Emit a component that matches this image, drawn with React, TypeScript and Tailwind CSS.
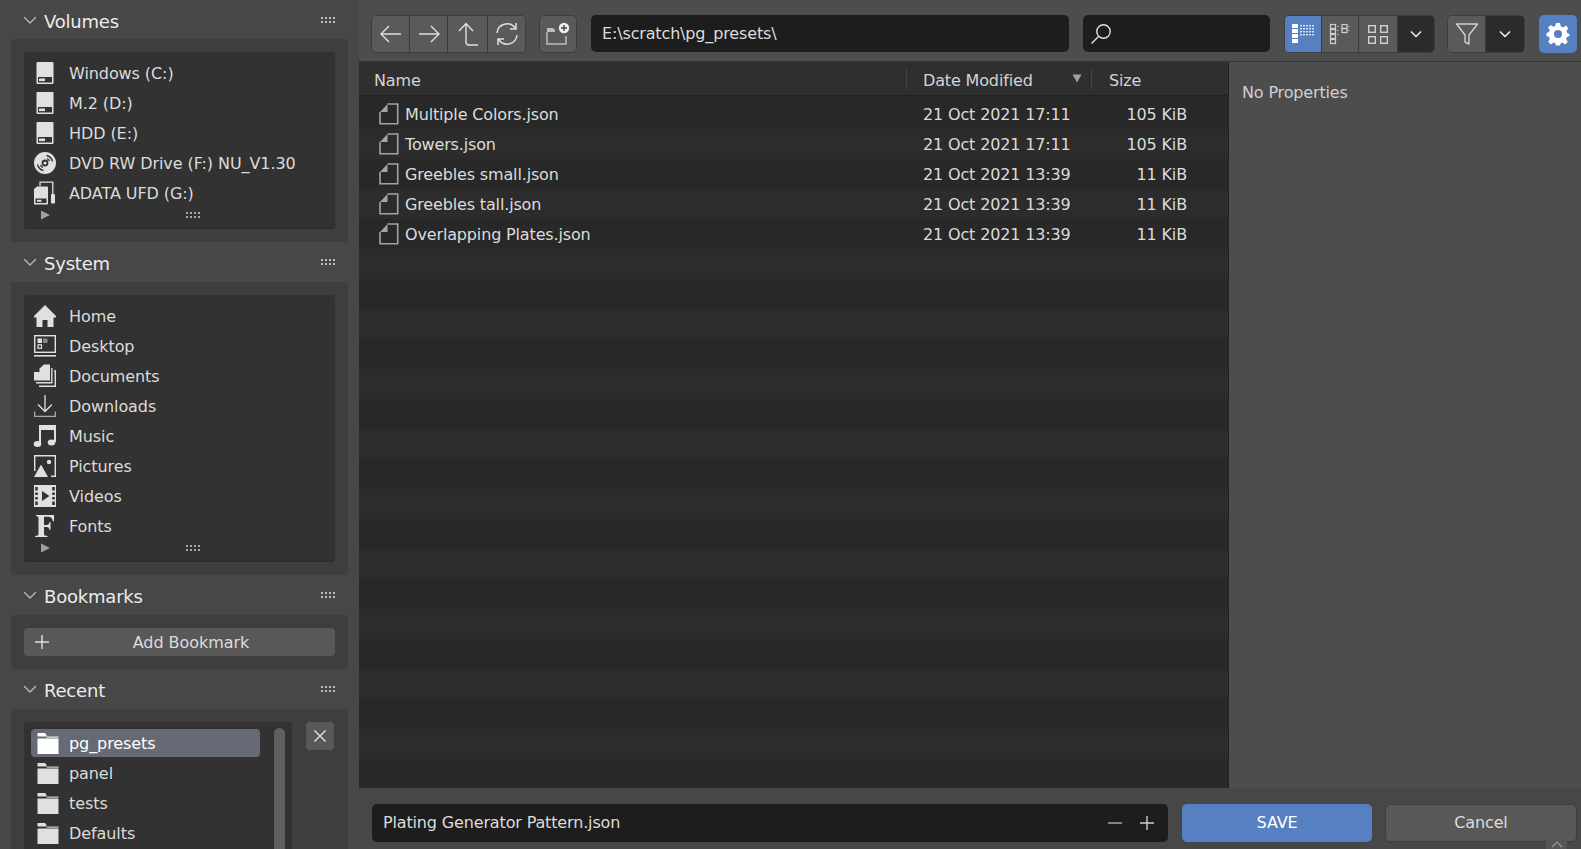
import React from "react";

const C = "#e0e0e0";

const Chevron = () => (
  <svg width="16" height="16" viewBox="0 0 16 16" fill="none" stroke="#b8b8b8" strokeWidth="1.4" strokeLinecap="round" strokeLinejoin="round" className="shrink-0">
    <path d="M2.5 5.5 L8 11 L13.5 5.5" />
  </svg>
);
const ChevronSmall = () => (
  <svg width="14" height="14" viewBox="0 0 14 14" fill="none" stroke="#e6e6e6" strokeWidth="1.7" strokeLinecap="round" strokeLinejoin="round">
    <path d="M2.5 5 L7 9.5 L11.5 5" />
  </svg>
);
const Grip = ({ color = "#bdbdbd" }: { color?: string }) => (
  <svg width="16" height="8" viewBox="0 0 16 8" className="shrink-0">
    {[0, 1, 2, 3].map((i) =>
      [0, 1].map((j) => <rect key={i + "-" + j} x={1 + i * 4} y={1 + j * 4} width="2" height="2" fill={color} />)
    )}
  </svg>
);
const Tri = ({ fill = "#a0a0a0" }: { fill?: string }) => (
  <svg width="11" height="10" viewBox="0 0 11 10" className="shrink-0"><path d="M1 0.5 L10 5 L1 9.5 Z" fill={fill} /></svg>
);

const Ico = ({ children, w = 24 }: { children: React.ReactNode; w?: number }) => (
  <svg width={w} height={w} viewBox="0 0 24 24" className="shrink-0" fill="none">{children}</svg>
);

const Drive = () => (
  <Ico>
    <path fillRule="evenodd" clipRule="evenodd" d="M3.5 2 a1 1 0 0 1 1-1 h15 a1 1 0 0 1 1 1 v20 a1 1 0 0 1-1 1 h-15 a1 1 0 0 1-1-1 Z M5 16 v5.6 h14 v-5.6 Z" fill={C} />
    <rect x="6" y="17.5" width="6" height="2.6" fill={C} />
  </Ico>
);
const Disc = () => (
  <Ico>
    <path fillRule="evenodd" clipRule="evenodd" d="M12 1a11 11 0 1 0 0 22a11 11 0 0 0 0-22Z M12 8.6a3.4 3.4 0 1 1 0 6.8a3.4 3.4 0 0 1 0-6.8Z" fill={C} />
    <circle cx="12" cy="12" r="1.6" fill={C} />
    <path d="M13.5 4.5a8 8 0 0 1 6 6 M14 7.5a5 5 0 0 1 2.5 2.5 M10.5 19.5a8 8 0 0 1-6-6 M10 16.5a5 5 0 0 1-2.5-2.5" stroke="#333" strokeWidth="1.3" />
  </Ico>
);
const Usb = () => (
  <Ico>
    <path fillRule="evenodd" clipRule="evenodd" d="M1 8 L4 5.5 H14 a1 1 0 0 1 1 1 v16 a1 1 0 0 1-1 1 H2 a1 1 0 0 1-1-1 Z M2.5 17.5 v4.6 h11 v-4.6 Z" fill={C} />
    <rect x="4" y="18.8" width="4.5" height="2" fill={C} />
    <path d="M7 5 V1.2 H19.8 V13" stroke={C} strokeWidth="1.3" />
    <rect x="18" y="13" width="4" height="9.5" rx="1" fill={C} />
  </Ico>
);
const Home = () => (
  <Ico>
    <path d="M12 1 L23 12 V13.5 H20.5 V23 H14.5 V16 H9.5 V23 H3.5 V13.5 H1 V12 Z" fill={C} />
  </Ico>
);
const Desktop = () => (
  <Ico>
    <rect x="1.7" y="1.7" width="20.6" height="16.6" stroke={C} strokeWidth="1.4" />
    <rect x="1" y="21" width="22" height="1.6" fill={C} />
    <rect x="4.5" y="4.5" width="4.5" height="4.5" fill={C} />
    <rect x="10" y="4.5" width="4.5" height="4.5" fill="#8a8a8a" />
    <rect x="5" y="10.8" width="3.5" height="3.5" stroke={C} strokeWidth="1.2" />
  </Ico>
);
const Docs = () => (
  <Ico>
    <path d="M6.5 4.5 L11 0.5 H17 V16.5 H1 V8 H6.5 Z" fill={C} />
    <path d="M18.8 4 V18.8 H3 M21 7 H22.3 V22.3 H6" stroke={C} strokeWidth="1.4" />
  </Ico>
);
const Down = () => (
  <Ico>
    <path d="M12 1 V17 M5 10.5 L12 17.5 L19 10.5" stroke={C} strokeWidth="1.3" strokeLinejoin="round" />
    <path d="M1.7 17.5 V22.3 H22.3 V17.5" stroke="#a8a8a8" strokeWidth="1.3" />
  </Ico>
);
const Music = () => (
  <Ico>
    <path d="M7 20 V2 H22 V18" stroke={C} strokeWidth="2" />
    <path d="M7 2 H22 V6 H7 Z" fill={C} />
    <ellipse cx="4.5" cy="20" rx="3.8" ry="3" fill={C} />
    <ellipse cx="18.5" cy="18.5" rx="3.8" ry="3" fill={C} />
  </Ico>
);
const Pict = () => (
  <Ico>
    <path d="M1.7 17 V1.7 H22.3 V22.3 H18" stroke={C} strokeWidth="1.4" />
    <path d="M1 23 L8 10.5 L15 23 Z" fill={C} />
    <circle cx="16" cy="8" r="2.2" fill={C} />
  </Ico>
);
const Video = () => (
  <Ico>
    <path fillRule="evenodd" clipRule="evenodd" d="M1 1 H23 V23 H1 Z M2.2 3 V6.5 H4.8 V3 Z M2.2 8.5 V11 H4.8 V8.5 Z M2.2 13 V15.5 H4.8 V13 Z M2.2 17.5 V21 H4.8 V17.5 Z M19.2 3 V6.5 H21.8 V3 Z M19.2 8.5 V11 H21.8 V8.5 Z M19.2 13 V15.5 H21.8 V13 Z M19.2 17.5 V21 H21.8 V17.5 Z M9 7 V17 L16.5 12 Z" fill={C} />
  </Ico>
);
const FontF = () => (
  <Ico>
    <path d="M3 1 H21 V7.5 H20 C19.5 4 17.5 2.8 14 2.8 H11 V11 H13.5 C15.5 11 16.2 10 16.5 8 H17.5 V16 H16.5 C16.2 14 15.5 13 13.5 13 H11 V20 C11 21.3 12 21.8 14.5 22 V23 H2 V22 C4.5 21.8 5.5 21.3 5.5 20 V4 C5.5 2.7 4.5 2.2 3 2 Z" fill={C} />
  </Ico>
);
const Folder = ({ c = C }: { c?: string }) => (
  <Ico>
    <path d="M1.5 2 H9 L10.5 4 V5.5 H1.5 Z" fill={c} />
    <path d="M1.5 7.5 H22.5 V23 H1.5 Z" fill={c} />
    <path d="M10.5 5.5 H22.5 V6.8 H10.5 Z" fill={c} opacity="0.85" />
  </Ico>
);
const FileIco = () => (
  <svg width="20" height="22" viewBox="0 0 20 22" fill="none" className="shrink-0">
    <path d="M1 9 L8.5 1 V9 Z" fill="#a3a3a3" />
    <path d="M8.5 1 H18.7 V20.7 H1 V9" stroke="#a3a3a3" strokeWidth="1.6" />
  </svg>
);

const RowItem = ({ icon, label }: { icon: React.ReactNode; label: string }) => (
  <div className="flex h-[30px] items-center">
    <div className="w-[30px] flex justify-center -ml-[2px] mr-[9px]">{icon}</div>
    <span className="text-[#dcdcdc] pt-[1px] tracking-[-0.08px]">{label}</span>
  </div>
);
const RecentItem = ({ icon, label, selected }: { icon: React.ReactNode; label: string; selected?: boolean }) => (
  <div className={selected ? "flex h-7 my-px items-center rounded-[4px] bg-[#656a75]" : "flex h-[30px] items-center"}>
    <div className="w-[30px] flex justify-center ml-[2px] mr-[6px]">{icon}</div>
    <span className={selected ? "text-white pt-[1px] tracking-[-0.08px]" : "text-[#dcdcdc] pt-[1px] tracking-[-0.08px]"}>{label}</span>
  </div>
);

const PanelHead = ({ title, h, nudge = "pt-[3px]" }: { title: string; h: string; nudge?: string }) => (
  <div className={`${h} flex items-center pl-[22px] pr-[23px] justify-between shrink-0`}>
    <div className="flex items-center gap-[6px]">
      <Chevron />
      <span className={`text-[18px] tracking-[-0.2px] text-[#ececec] ${nudge}`}>{title}</span>
    </div>
    <Grip />
  </div>
);

const ListFoot = ({ h }: { h: string }) => (
  <div className={`${h} flex items-center pl-[8px]`}>
    <Tri />
    <div className="ml-[134px]"><Grip color="#a8a8a8" /></div>
  </div>
);

const ToolBtn = ({ children, w = "w-[38px]", cls = "bg-[#5a5a5a]" }: { children: React.ReactNode; w?: string; cls?: string }) => (
  <div className={`${w} ${cls} h-full flex items-center justify-center border-r border-[#3a3a3a] last:border-r-0`}>{children}</div>
);

const files = [
  ["Multiple Colors.json", "21 Oct 2021 17:11", "105 KiB"],
  ["Towers.json", "21 Oct 2021 17:11", "105 KiB"],
  ["Greebles small.json", "21 Oct 2021 13:39", "11 KiB"],
  ["Greebles tall.json", "21 Oct 2021 13:39", "11 KiB"],
  ["Overlapping Plates.json", "21 Oct 2021 13:39", "11 KiB"],
];
const stripes = Array.from({ length: 23 }, (_, i) => i);

export default function App() {
  return (
    <div
      className="flex w-[1581px] h-[849px] overflow-hidden bg-[#4a4a4a] text-[16px] tracking-[-0.15px] text-[#dcdcdc] leading-none"
      style={{ fontFamily: '"DejaVu Sans", sans-serif' }}
    >
      {/* Sidebar */}
      <div className="w-[359px] shrink-0 flex flex-col bg-[#474747] overflow-hidden">
        <PanelHead title="Volumes" h="h-[39px]" nudge="pt-[5px]" />
        <div className="mx-[11px] h-[203px] rounded-[4px] bg-[#3e3e3e] p-[13px] shrink-0">
          <div className="rounded-[4px] bg-[#323232] h-[177px] pt-[6px] px-[8px] border-b border-[#2a2a2a]">
            <RowItem icon={<Drive />} label="Windows (C:)" />
            <RowItem icon={<Drive />} label="M.2 (D:)" />
            <RowItem icon={<Drive />} label="HDD (E:)" />
            <RowItem icon={<Disc />} label="DVD RW Drive (F:) NU_V1.30" />
            <RowItem icon={<Usb />} label="ADATA UFD (G:)" />
            <ListFoot h="h-[13px]" />
          </div>
        </div>
        <PanelHead title="System" h="h-[40px]" nudge="pt-[4px]" />
        <div className="mx-[11px] h-[293px] rounded-[4px] bg-[#3e3e3e] p-[13px] shrink-0">
          <div className="rounded-[4px] bg-[#323232] h-[267px] pt-[6px] px-[8px] border-b border-[#2a2a2a]">
            <RowItem icon={<Home />} label="Home" />
            <RowItem icon={<Desktop />} label="Desktop" />
            <RowItem icon={<Docs />} label="Documents" />
            <RowItem icon={<Down />} label="Downloads" />
            <RowItem icon={<Music />} label="Music" />
            <RowItem icon={<Pict />} label="Pictures" />
            <RowItem icon={<Video />} label="Videos" />
            <RowItem icon={<FontF />} label="Fonts" />
            <ListFoot h="h-[14px]" />
          </div>
        </div>
        <PanelHead title="Bookmarks" h="h-[40px]" />
        <div className="mx-[11px] h-[54px] rounded-[4px] bg-[#3e3e3e] p-[13px] shrink-0">
          <div className="relative rounded-[4px] bg-[#585858] h-[28px] flex items-center justify-center">
            <svg width="16" height="16" viewBox="0 0 16 16" className="absolute left-[10px]" stroke="#e0e0e0" strokeWidth="1.4"><path d="M8 1 V15 M1 8 H15" /></svg>
            <span className="pl-[23px] pt-[1px] tracking-[-0.05px]">Add Bookmark</span>
          </div>
        </div>
        <PanelHead title="Recent" h="h-[40px]" />
        <div className="mx-[11px] flex-1 rounded-t-[4px] bg-[#3e3e3e] pt-[13px] pl-[13px] pr-[13px] flex gap-[14px] min-h-0">
          <div className="w-[268px] h-[130px] rounded-[4px] bg-[#323232] pt-[6px] pl-[7px] pr-[7px] flex gap-[14px] shrink-0">
            <div className="w-[229px] shrink-0">
              <RecentItem selected icon={<Folder c="#ffffff" />} label="pg_presets" />
              <RecentItem icon={<Folder />} label="panel" />
              <RecentItem icon={<Folder />} label="tests" />
              <RecentItem icon={<Folder />} label="Defaults" />
            </div>
            <div className="w-[12px] h-[124px] rounded-t-[6px] bg-[#5f5f5f]" />
          </div>
          <div className="w-[28px] h-[28px] rounded-[4px] bg-[#585858] flex items-center justify-center">
            <svg width="14" height="14" viewBox="0 0 14 14" stroke="#e0e0e0" strokeWidth="1.4"><path d="M1.5 1.5 L12.5 12.5 M12.5 1.5 L1.5 12.5" /></svg>
          </div>
        </div>
      </div>

      {/* Main */}
      <div className="flex-1 flex flex-col min-w-0">
        {/* Toolbar */}
        <div className="h-[62px] shrink-0 border-b border-[#333] bg-[#4d4d4d] pt-[15px] pl-[12px] flex">
          <div className="flex h-[38px] rounded-[5px] overflow-hidden border border-[#3d3d3d] w-[155px]">
            <ToolBtn><svg width="24" height="24" viewBox="0 0 24 24" fill="none" stroke={C} strokeWidth="1.4"><path d="M2 12 H22 M10 4 L2 12 L10 20" /></svg></ToolBtn>
            <ToolBtn><svg width="24" height="24" viewBox="0 0 24 24" fill="none" stroke={C} strokeWidth="1.4"><path d="M2 12 H22 M14 4 L22 12 L14 20" /></svg></ToolBtn>
            <ToolBtn w="w-[40px]"><svg width="24" height="24" viewBox="0 0 24 24" fill="none" stroke={C} strokeWidth="1.4"><path d="M3 9 L10 1.5 L17 9 M10 2 V20 Q10 23 13 23 H22" /></svg></ToolBtn>
            <ToolBtn w="flex-1"><svg width="24" height="24" viewBox="0 0 24 24" fill="none" stroke={C} strokeWidth="1.5"><path d="M2 11 A10 10 0 0 1 20 6 M21 1 V7 H15 M22 13 A10 10 0 0 1 4 18 M3 23 V17 H9" /></svg></ToolBtn>
          </div>
          <div className="ml-[13px] w-[38px] h-[38px] rounded-[5px] bg-[#5a5a5a] border border-[#3d3d3d] flex items-center justify-center">
            <svg width="26" height="26" viewBox="0 0 26 26" fill="none">
              <path d="M2 7 H8 L10 9 V11 H2 Z" fill="#bdbdbd" />
              <path d="M2 11 V23 H21 V15" stroke="#bdbdbd" strokeWidth="1.5" />
              <circle cx="19" cy="7" r="5.2" fill="#ededed" />
              <path d="M16 7 H22 M19 4 V10" stroke="#444" strokeWidth="1.4" />
            </svg>
          </div>
          <div className="ml-[14px] w-[478px] h-[37px] rounded-[5px] bg-[#1d1d1d] flex items-center pl-[11px] pt-[1px]">E:\scratch\pg_presets\</div>
          <div className="ml-[14px] w-[187px] h-[37px] rounded-[5px] bg-[#1d1d1d] flex items-center pl-[7px]">
            <svg width="22" height="22" viewBox="0 0 22 22" fill="none" stroke={C} strokeWidth="1.4"><circle cx="13.5" cy="8.5" r="6.7" /><path d="M8.5 13.5 L1.5 20.5" /></svg>
          </div>
          <div className="ml-[14px] flex h-[38px] w-[151px] rounded-[5px] overflow-hidden border border-[#3d3d3d]">
            <ToolBtn w="w-[37px]" cls="bg-[#5680c2]">
              <svg width="24" height="22" viewBox="0 0 24 22" fill="#fff">
                {[1, 6, 11, 16].map((y) => <rect key={y} x="1" y={y} width="6" height="4" />)}
                {[2, 5, 8, 11].map((y) => [9, 12, 15, 18, 21].map((x) => <rect key={x + "-" + y} x={x} y={y} width="2" height="1.4" fill="#dbe6f7" />))}
              </svg>
            </ToolBtn>
            <ToolBtn w="w-[37px]">
              <svg width="22" height="22" viewBox="0 0 22 22" fill="none" stroke="#cfcfcf" strokeWidth="1.2">
                {[1.5, 6.5, 11.5, 16.5].map((y) => <rect key={y} x="1.5" y={y} width="5" height="4" />)}
                {[1.5, 5.5].map((y) => <rect key={y} x="13" y={y} width="5" height="4" />)}
                <path d="M9 3 V4 M9 7 V8 M9 11 V12 M20 3 V4 M20 7 V8" />
              </svg>
            </ToolBtn>
            <ToolBtn w="w-[39px]">
              <svg width="22" height="22" viewBox="0 0 22 22" fill="none" stroke="#cfcfcf" strokeWidth="1.4">
                <rect x="1.7" y="2.7" width="6.6" height="6.6" /><rect x="13.7" y="2.7" width="6.6" height="6.6" />
                <rect x="1.7" y="13.7" width="6.6" height="6.6" /><rect x="13.7" y="13.7" width="6.6" height="6.6" />
              </svg>
            </ToolBtn>
            <ToolBtn w="flex-1" cls="bg-[#2b2b2b]"><ChevronSmall /></ToolBtn>
          </div>
          <div className="ml-[12px] flex h-[38px] w-[78px] rounded-[5px] overflow-hidden border border-[#3d3d3d]">
            <ToolBtn cls="bg-[#5a5a5a]">
              <svg width="24" height="24" viewBox="0 0 24 24" fill="none" stroke="#d0d0d0" strokeWidth="1.4" strokeLinejoin="round"><path d="M1.5 2 H22.5 L14 13 V22 L10 20 V13 Z" /></svg>
            </ToolBtn>
            <ToolBtn w="flex-1" cls="bg-[#2b2b2b]"><ChevronSmall /></ToolBtn>
          </div>
          <div className="ml-[14px] w-[38px] h-[38px] rounded-[5px] bg-[#5680c2] flex items-center justify-center">
            <svg width="24" height="24" viewBox="0 0 24 24" fill="#fff">
              <path fillRule="evenodd" clipRule="evenodd" d="M10 1 H14 L14.8 4.4 L17 5.4 L20 3.6 L22.4 6.4 L20.4 9 L21.2 11 L23.5 12 V14 L21 15 L20.2 17 L21.8 20 L19 22.4 L16.4 20.6 L14.6 21.4 L14 23.5 H10 L9.4 21.4 L7.4 20.6 L5 22.4 L2.2 20 L3.8 17 L3 15 L0.5 14 V11 L3 10 L3.8 8 L2 5.6 L4.6 3 L7.2 4.8 L9.2 4 Z M12 8 a4 4 0 1 0 0 8 a4 4 0 0 0 0-8 Z" />
            </svg>
          </div>
        </div>

        {/* Content */}
        <div className="flex-1 flex min-h-0">
          <div className="w-[870px] shrink-0 bg-[#282828] flex flex-col overflow-hidden border-r border-[#222]">
            <div className="h-[34px] shrink-0 flex items-center bg-[#2f2f2f] border-b border-[#222] text-[#d4d4d4]">
              <div className="w-[548px] pl-[15px] h-[20px] flex items-center border-r border-[#444] pt-[5px]">Name</div>
              <div className="w-[185px] pl-[16px] h-[20px] flex items-center justify-between pr-[9px] border-r border-[#444] pt-[5px]">
                <span>Date Modified</span>
                <svg width="10" height="9" viewBox="0 0 10 9" className="mb-[5px]"><path d="M0.5 0.5 H9.5 L5 8.5 Z" fill="#a0a0a0" /></svg>
              </div>
              <div className="pl-[17px] pt-[5px]">Size</div>
            </div>
            <div className="flex-1 flex flex-col">
              <div className="h-[3px] shrink-0 bg-[#282828]" />
              {stripes.map((i) => {
                const f = files[i];
                const cls = i % 2 === 0 ? "bg-[#282828]" : "bg-[#2c2c2c]";
                return (
                  <div key={i} className={`h-[30px] shrink-0 flex items-center ${cls}`}>
                    {f && (
                      <>
                        <div className="w-[46px] pl-[20px] shrink-0"><FileIco /></div>
                        <div className="w-[518px] shrink-0 text-[#dcdcdc] pt-[1px]">{f[0]}</div>
                        <div className="w-[180px] shrink-0 pt-[1px]">{f[1]}</div>
                        <div className="w-[84px] shrink-0 text-right pt-[1px]">{f[2]}</div>
                      </>
                    )}
                  </div>
                );
              })}
            </div>
          </div>
          <div className="flex-1 pl-[13px] pt-[23px] text-[#d0d0d0] bg-[#4d4d4d]">No Properties</div>
        </div>

        {/* Bottom */}
        <div className="h-[61px] shrink-0 bg-[#474747] pt-[16px] pl-[13px] flex relative">
          <div className="w-[796px] h-[38px] rounded-[5px] bg-[#1d1d1d] flex items-center pl-[11px] pr-[13px] justify-between">
            <span>Plating Generator Pattern.json</span>
            <div className="flex items-center gap-[16px]">
              <svg width="16" height="16" viewBox="0 0 16 16" stroke="#b0b0b0" strokeWidth="1.4"><path d="M1 8 H15" /></svg>
              <svg width="16" height="16" viewBox="0 0 16 16" stroke="#cfcfcf" strokeWidth="1.4"><path d="M8 1 V15 M1 8 H15" /></svg>
            </div>
          </div>
          <div className="ml-[14px] w-[190px] h-[38px] rounded-[5px] bg-[#5680c2] flex items-center justify-center text-white">SAVE</div>
          <div className="ml-[13px] w-[192px] h-[38px] rounded-[5px] bg-[#585858] border border-[#3d3d3d] flex items-center justify-center">Cancel</div>
          <div className="absolute right-[14px] bottom-0 w-[21px] h-[9px] bg-[#555] flex justify-center">
            <svg width="12" height="8" viewBox="0 0 12 8" fill="none" stroke="#999" strokeWidth="1.2"><path d="M1 7 L6 2 L11 7" /></svg>
          </div>
        </div>
      </div>
    </div>
  );
}
